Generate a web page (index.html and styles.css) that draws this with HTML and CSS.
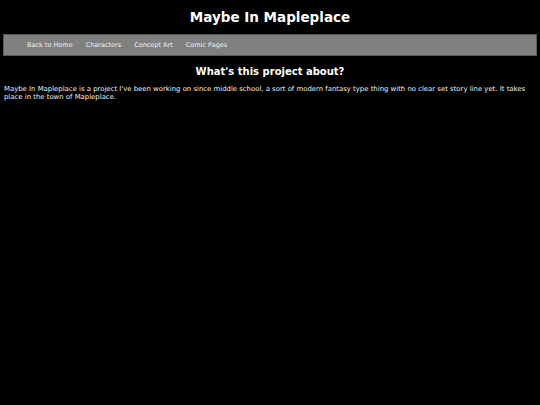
FILE: index.html
```html
<!DOCTYPE html>
<html>
<head>
<meta charset="utf-8">
<title>Maybe In Mapleplace</title>
<link rel="stylesheet" href="styles.css">
</head>
<body>
<h1 class="title">Maybe In Mapleplace</h1>
<nav class="nav">
  <a href="#">Back to Home</a>
  <a href="#">Characters</a>
  <a href="#">Concept Art</a>
  <a href="#">Comic Pages</a>
</nav>
<h2 class="heading">What's this project about?</h2>
<p class="text">Maybe In Mapleplace is a project I've been working on since middle school, a sort of modern fantasy type thing with no clear set story line yet. It takes place in the town of Mapleplace.</p>
</body>
</html>
```
FILE: styles.css
```css
html, body {
  background: #000;
}
body {
  margin: 0;
  padding: 0 3px;
  color: #fff;
  font-family: "DejaVu Sans", Verdana, sans-serif;
  -webkit-font-smoothing: antialiased;
}
.title {
  margin: 0;
  padding-top: 9px;
  height: 25px;
  font-size: 13.5px;
  line-height: 16px;
  text-align: center;
}
.nav {
  display: flex;
  gap: 13px;
  align-items: center;
  height: 20px;
  padding-left: 23px;
  background: #808080;
  border: 1px solid #5a5a5a;
}
.nav a {
  color: #f0f0f0;
  text-decoration: none;
  font-size: 6.5px;
}
.heading {
  margin: 0;
  padding-top: 10px;
  font-size: 10px;
  line-height: 12px;
  text-align: center;
}
.text {
  margin: 7px 0 0 1px;
  font-size: 6.9px;
  line-height: 8px;
  color: #f0f0f0;
}
```
